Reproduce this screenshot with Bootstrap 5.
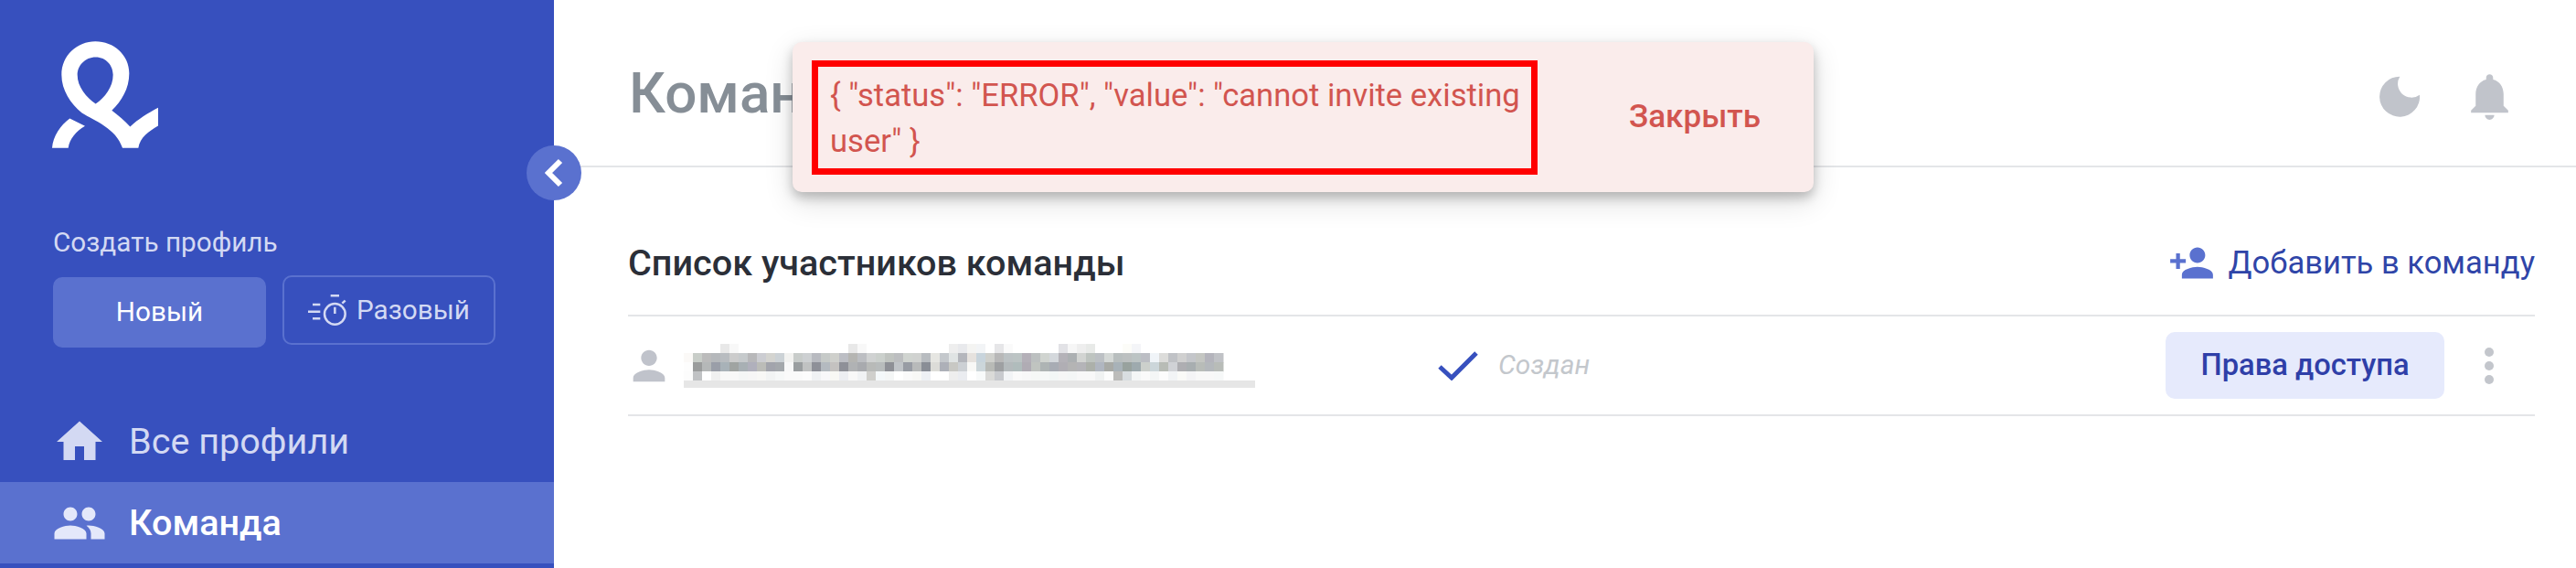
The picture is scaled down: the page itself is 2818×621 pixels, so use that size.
<!DOCTYPE html>
<html lang="ru">
<head>
  <meta charset="UTF-8" />
  <meta name="viewport" content="width=device-width, initial-scale=1.0"/>
  <title>Команда</title>
  <link href="https://cdn.jsdelivr.net/npm/bootstrap@5.3.3/dist/css/bootstrap.min.css" rel="stylesheet">
  <style>
    body { font-family: Roboto, "Liberation Sans", sans-serif; background: #fff; overflow: hidden; }
    .page-shell { height: 621px; overflow: hidden; }

    .side-rail { width: 606px; flex: none; background: #3750be; height: 621px; }
    .brand-mark { width: 116px; height: 117px; margin: 45px 0 0 57px; fill: #fff; }
    .create-label { margin: 88px 0 0 58px; font-size: 29.7px; line-height: 30px; color: #d3d9f3; }
    .create-row { margin: 21px 0 0 58px; gap: 18px; }
    .create-btn { width: 233px; font-size: 29.7px; border-radius: 10px; padding: 0; }
    .create-btn.is-new { height: 77px; margin-top: 2px; background: #5a71cf; border: 0; color: #fff; }
    .create-btn.is-once { height: 76px; background: transparent; border: 2px solid #5a71cf; color: #d3d9f3; }
    .create-btn:hover { color: #fff; }
    .timer-glyph { width: 44px; height: 34px; margin-right: 9px; fill: none; stroke: #d3d9f3; stroke-width: 7.5; }

    .rail-nav { margin-top: 58px; }
    .rail-link { height: 89px; padding: 0 0 0 57px; gap: 24px; color: #d3d9f3; font-size: 39.6px; }
    .rail-link svg { width: 60px; height: 60px; fill: currentColor; }
    .rail-link.is-current { background: #5a71cf; color: #fff; font-weight: 500; }
    .rail-link:hover { color: #fff; }
    .rail-link.is-current svg { fill: #e4e8fa; }

    .collapse-knob { left: 576px; top: 159px; width: 60px; height: 60px; border-radius: 50%; background: #5a71cf; border: 0; padding: 0; z-index: 5; }
    .collapse-knob svg { width: 20px; height: 32px; fill: none; stroke: #fff; stroke-width: 6; }

    .top-strip { height: 183px; border-bottom: 2px solid #e4e5e8; padding: 0 64px 0 82px; }
    .page-title { font-size: 62px; font-weight: 500; color: #868e96; margin: 0; line-height: 1; padding-top: 22px; }
    .top-icons { gap: 46px; padding-top: 30px; fill: #c1c4cb; }

    .team-area { padding: 0 45px 0 81px; }
    .team-head { height: 163px; padding-top: 49px; border-bottom: 2px solid #e4e5e8; }
    .team-title { font-size: 39.6px; font-weight: 500; color: #2b2f38; margin: 0; }
    .invite-link { color: #2f45a8; font-size: 34.6px; text-decoration: none; gap: 15px; }
    .invite-link svg { width: 51px; height: 51px; fill: #5a71cf; }

    .member-row { height: 109px; border-bottom: 2px solid #e4e5e8; }
    .member-icon { width: 52px; height: 52px; margin-left: -3px; fill: #c0c3cb; }
    .blur-mail { width: 625px; height: 48px; margin: 0 0 0 12px; filter: blur(.5px); }
    .check-mark { width: 44px; height: 32px; margin-left: 200px; fill: none; stroke: #3750be; stroke-width: 5; }
    .member-state { margin-left: 22px; font-size: 29.9px; font-style: italic; color: #c3c7cc; }
    .rights-btn { width: 305px; height: 73px; margin-left: auto; padding: 0; border: 0; border-radius: 10px; background: #e6eafc; color: #2f3fa8; font-size: 32.7px; font-weight: 500; }
    .rights-btn:hover { background: #dce2fb; color: #2f3fa8; }
    .more-dots { width: 10px; height: 40px; margin: 0 45px 0 44px; fill: #c3c6cc; }

    .error-toast { left: 867px; top: 46px; width: 1117px; height: 164px; background: #faeceb; border-radius: 10px; z-index: 10;
      box-shadow: 0 10px 32px rgba(0, 0, 0, .14), 0 6px 12px rgba(0, 0, 0, .22); }
    .error-text { width: 794px; height: 125px; margin-left: 21px; padding: 6px 10px 0 13px; border: 7px solid #f00; color: #d2554f; font-size: 34.6px; line-height: 50px; }
    .error-close { margin-left: 100px; padding: 0; border: 0; background: none; color: #d2554f; font-size: 35px; font-weight: 500; }
  </style>
</head>
<body>

<div class="page-shell d-flex position-relative">

  <aside class="side-rail d-flex flex-column">
    <svg class="brand-mark" viewBox="52 45 348 350" fill-rule="evenodd">
      <path d="M194 45C135 45 83 90 83 155C83 205 112 250 150 280C190 305 262 330 283 395L335 395C340 360 370 340 400 322L400 263C365 282 335 300 308 325C290 305 270 290 248 272C280 240 305 200 305 150C305 90 255 45 194 45ZM195 97C160 97 135 125 135 155C135 195 165 230 195 250C225 230 252 195 252 155C252 125 230 97 195 97ZM52 395C55 355 80 320 110 298L160 323C130 340 110 365 105 395Z"/>
    </svg>

    <div class="create-label">Создать профиль</div>
    <div class="create-row d-flex align-items-start">
      <button type="button" class="btn create-btn is-new">Новый</button>
      <button type="button" class="btn create-btn is-once d-flex align-items-center justify-content-center">
        <svg class="timer-glyph" viewBox="110 100 132 100">
          <circle cx="198" cy="163" r="34"/>
          <path d="M184 103h28M198 140v22M222 128l10-9M125 132h25M110 155h40M125 178h25"/>
        </svg>
        Разовый
      </button>
    </div>

    <nav class="rail-nav nav flex-column">
      <a class="nav-link rail-link d-flex align-items-center" href="#">
        <svg viewBox="0 0 24 24"><path d="M10 20v-6h4v6h5v-8h3L12 3 2 12h3v8z"/></svg>
        Все профили
      </a>
      <a class="nav-link rail-link is-current d-flex align-items-center" href="#">
        <svg viewBox="0 0 24 24"><path d="M16 11c1.66 0 2.99-1.34 2.99-3S17.66 5 16 5c-1.66 0-3 1.34-3 3s1.34 3 3 3zm-8 0c1.66 0 2.99-1.34 2.99-3S9.66 5 8 5C6.34 5 5 6.34 5 8s1.34 3 3 3zm0 2c-2.33 0-7 1.17-7 3.5V19h14v-2.5c0-2.33-4.67-3.5-7-3.5zm8 0c-.29 0-.62.02-.97.05 1.16.84 1.97 1.97 1.97 3.45V19h6v-2.5c0-2.33-4.67-3.5-7-3.5z"/></svg>
        Команда
      </a>
    </nav>
  </aside>

  <button type="button" class="collapse-knob position-absolute d-flex align-items-center justify-content-center">
    <svg viewBox="0 0 20 32"><path d="M17 3L4 16l13 13"/></svg>
  </button>

  <main class="flex-grow-1">
    <header class="top-strip d-flex align-items-center justify-content-between">
      <h1 class="page-title">Команда</h1>
      <div class="top-icons d-flex align-items-center">
        <svg width="45" height="45" viewBox="0 0 135 135"><path d="M70 2A66 66 0 1 0 135 62A45 45 0 0 1 70 2Z"/></svg>
        <svg width="61" height="61" viewBox="0 0 24 24"><path d="M12 22c1.1 0 2-.9 2-2h-4c0 1.1.9 2 2 2zm6-6v-5c0-3.07-1.63-5.64-4.5-6.32V4c0-.83-.67-1.5-1.5-1.5s-1.5.67-1.5 1.5v.68C7.64 5.36 6 7.92 6 11v5l-2 2v1h16v-1l-2-2z"/></svg>
      </div>
    </header>

    <section class="team-area">
      <div class="team-head d-flex align-items-center justify-content-between">
        <h2 class="team-title">Список участников команды</h2>
        <a class="invite-link d-flex align-items-center" href="#">
          <svg viewBox="0 0 24 24"><path d="M15 12c2.21 0 4-1.79 4-4s-1.79-4-4-4-4 1.79-4 4 1.79 4 4 4zm-9-2V7H4v3H1v2h3v3h2v-3h3v-2H6zm9 4c-2.67 0-8 1.34-8 4v2h16v-2c0-2.66-5.33-4-8-4z"/></svg>
          Добавить в команду
        </a>
      </div>

      <div class="member-row d-flex align-items-center">
        <svg class="member-icon" viewBox="0 0 24 24"><path d="M12 12c2.21 0 4-1.79 4-4s-1.79-4-4-4-4 1.79-4 4 1.79 4 4 4zm0 2c-2.67 0-8 1.34-8 4v2h16v-2c0-2.66-5.33-4-8-4z"/></svg>
        <svg class="blur-mail" id="blurMail" viewBox="0 0 625 48"></svg>
        <svg class="check-mark" viewBox="0 0 44 32"><path d="M2 17l13 12L42 2"/></svg>
        <span class="member-state">Создан</span>
        <button type="button" class="btn rights-btn">Права доступа</button>
        <svg class="more-dots" viewBox="0 0 10 40"><circle cx="5" cy="5" r="5"/><circle cx="5" cy="20" r="5"/><circle cx="5" cy="35" r="5"/></svg>
      </div>
    </section>
  </main>

  <div class="error-toast position-absolute d-flex align-items-center">
    <div class="error-text">{ "status": "ERROR", "value": "cannot invite existing user" }</div>
    <button type="button" class="error-close">Закрыть</button>
  </div>
</div>

<script>
  // замазанный адрес почты: серые клетки 10x10, плюс полоса снизу
  const sparse = {4:"e8e8e8",5:"f8f8f8",18:"e8e8e8",19:"f8f8f8",29:"eeeeee",30:"e8e9ec",31:"f4f4f2",32:"f2f4f6",34:"e6e6e8",35:"fafafa",41:"e2e2e6",42:"f6f6f6",43:"eeeeee",44:"e8eae8",48:"fcfcf8",49:"f4f5f8"};
  const rows = [
    "fbf9f7 c8cdc8 bbbbbb b5b8bb b8bcc0 cccccc c6cacc b8b8ba cccdd2 d4d4d0 ccd2d6 f2f2f0 c8ccca cdd0d2 b8bac0 c6cac8 cfd0cc bcbec4 b5b5b2 bcbec2 d0d2d2 cbd0cc c0c4c0 bcbec0 d0d4d0 d0d2d0 b8bcc0 e6e6e2 c4c8cc e0e4e4 b4b6bc e6e2de c8d4dc cfd0cc b8b8b8 bcc2c4 bcc4c4 b4b0b8 bcc0c0 d0d4d0 d4d8dc b4b2b8 acb0b2 d2d4d2 bec4c0 bcc0c4 d4d8d6 b8bebe bcc0c0 bcc4c4 bcbec4 f0f4f8 dcdcda c0c2c6 d0d0d0 c4c6ca c4c6c2 b4b4bc c0c2c6",
    "fdfdfd 9a9c9c b5b8b8 9a9ea8 a8b2b8 a0a4a2 a8b0b4 b0b0bc bbbcb8 a2a4ac a4a8ac f8f8f8 9a9ea0 c0c2c2 8e9098 b4bac0 c4c2c0 8e9098 b0b2b4 a8aaae b8bab8 b8bcbc 8e9096 c0c4c8 989ca4 b8baba 8a8e96 dcdcd8 adb0b8 c8c8c4 ccd0d4 f8f8f6 ccd6da b8bab6 9ea0a2 b4babc b0bcbc b0acb4 c0c4c0 aeb4b4 a8acb4 b0aeb4 b4b4b4 b4b4b8 acb0aa b0b6c0 a8aaa6 a8b2b8 98a29e 9eaaae ccd0cc ccd6da b8bcb6 d0d2d6 aeaeb2 a8aeb0 b8bcb8 b4b8bc b8bcb8",
    "fcfcfc c0c2c4 ffffff f0f0f0 f8f8f8 f8f8f8 f4f6f6 f6f6f6 f8f8f6 f2f4f4 f6f8f8 fafafa fafafa fcfcfc f0f2f4 f8f8fa f8f8f4 eceef2 f8f8f8 f0f2f4 cfcfcc f4f8fa f4f6f6 ffffff fafafa f8f8f6 eef0f4 ffffff ffffff eeeeee eaecf0 ffffff f8fafa dadad8 c8cace f2f4f6 fafafa f8f8f8 f6f8f6 f6f8f8 f2f6f6 f6f6f6 f4f6f6 f8f8f8 f8f8f8 f0f2f2 fcfcfc bcbcba d8dde0 f4f6f6 fafafa f4f6f6 fcfcfc f2f4f6 fafaf8 f4f4f6 f8f8f8 f8f8f8 f6f8f8"
  ];

  let cells = "";
  for (const col in sparse) {
    cells += `<rect x="${col * 10}" y="0" width="10" height="10" fill="#${sparse[col]}"/>`;
  }
  rows.forEach((row, r) => {
    row.split(" ").forEach((grey, c) => {
      cells += `<rect x="${c * 10}" y="${(r + 1) * 10}" width="10.5" height="10.5" fill="#${grey}"/>`;
    });
  });
  cells += '<rect x="0" y="40" width="625" height="8" fill="#e6e6e6"/>';
  document.getElementById("blurMail").innerHTML = cells;
</script>

<script src="https://cdn.jsdelivr.net/npm/bootstrap@5.3.3/dist/js/bootstrap.bundle.min.js"></script>
</body>
</html>
